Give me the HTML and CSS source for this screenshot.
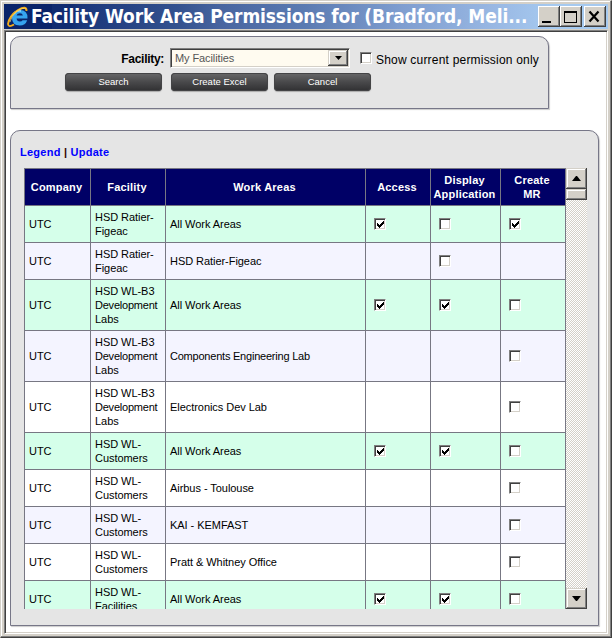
FILE: index.html
```
<!DOCTYPE html>
<html lang="en">
<head>
<meta charset="utf-8">
<title>Facility Work Area Permissions</title>
<link rel="stylesheet" href="styles.css">
</head>
<body>
<div class="window">
  <header class="titlebar">
    <svg class="logo" width="24" height="24" viewBox="0 0 24 24">
      <path d="M21.500 13.500H10.600q.3 3 3.300 3 2 0 2.700-1.200h4.600q-1.700 5.200-7.500 5.200Q6 20.500 6 12.800t7.700-7.800Q22 5 21.500 13.500zM10.600 10.500h6.300Q16.500 8.300 13.800 8.300q-2.700 0-3.200 2.200z" fill="#36a4f0" fill-rule="evenodd"/>
      <path d="M8 9q2-4 7-3" fill="none" stroke="#9edcff" stroke-width="1.500"/>
      <path d="M20.500 6Q21 0 12 5 3 11 2 19q.5 4 6 .5" fill="none" stroke="#f3ad1e" stroke-width="1.900"/>
      <path d="M20 4Q17 2 11 6 5 11 4 17" fill="none" stroke="#ffe06a" stroke-width=".7"/>
    </svg>
    <h1 class="title">Facility Work Area Permissions for (Bradford, Meli...</h1>
    <div class="controls">
      <button class="control" aria-label="Minimize"><svg width="22" height="21"><path d="M4 15h9v2H4z"/></svg></button>
      <button class="control" aria-label="Maximize"><svg width="22" height="21"><path fill-rule="evenodd" d="M4 5h13v12H4zM5 7v9h11V7z"/></svg></button>
      <button class="control close" aria-label="Close"><svg width="22" height="21"><path d="M5.500 5.500l9 10M14.500 5.500l-9 10" fill="none" stroke="#000" stroke-width="2.200"/></svg></button>
    </div>
  </header>
  <main class="content">
    <section class="panel search">
      <div class="search-row">
        <label class="facility-label">Facility:</label>
        <div class="select"><span>My Facilities</span><i class="drop"><svg width="7" height="4"><path d="M0 0h7L3.500 4z"/></svg></i></div>
        <span class="check"></span>
        <span class="current">Show current permission only</span>
      </div>
      <div class="buttons"><button>Search</button><button>Create Excel</button><button>Cancel</button></div>
    </section>
    <section class="panel results">
      <nav class="links"><a>Legend</a> | <a>Update</a></nav>
      <div class="viewport">
        <table>
          <colgroup><col class="c1"><col class="c2"><col class="c3"><col class="c4"><col class="c5"><col class="c6"></colgroup>
          <thead><tr><th>Company</th><th>Facility</th><th>Work Areas</th><th>Access</th><th>Display Application</th><th>Create<br>MR</th></tr></thead>
          <tbody>
            <tr class="all"><td>UTC</td><td>HSD Ratier-<br>Figeac</td><td>All Work Areas</td><td><span class="check on"></span></td><td><span class="check"></span></td><td><span class="check on"></span></td></tr>
            <tr class="alt"><td>UTC</td><td>HSD Ratier-<br>Figeac</td><td>HSD Ratier-Figeac</td><td></td><td><span class="check"></span></td><td></td></tr>
            <tr class="all tall"><td>UTC</td><td>HSD WL-B3<br><span class="tight">Development</span><br>Labs</td><td>All Work Areas</td><td><span class="check on"></span></td><td><span class="check on"></span></td><td><span class="check"></span></td></tr>
            <tr class="alt tall"><td>UTC</td><td>HSD WL-B3<br><span class="tight">Development</span><br>Labs</td><td><span class="tight">Components Engineering Lab</span></td><td></td><td></td><td><span class="check"></span></td></tr>
            <tr class="tall"><td>UTC</td><td>HSD WL-B3<br><span class="tight">Development</span><br>Labs</td><td>Electronics Dev Lab</td><td></td><td></td><td><span class="check"></span></td></tr>
            <tr class="all"><td>UTC</td><td>HSD WL-<br>Customers</td><td>All Work Areas</td><td><span class="check on"></span></td><td><span class="check on"></span></td><td><span class="check"></span></td></tr>
            <tr><td>UTC</td><td>HSD WL-<br>Customers</td><td>Airbus - Toulouse</td><td></td><td></td><td><span class="check"></span></td></tr>
            <tr class="alt"><td>UTC</td><td>HSD WL-<br>Customers</td><td>KAI - KEMFAST</td><td></td><td></td><td><span class="check"></span></td></tr>
            <tr><td>UTC</td><td>HSD WL-<br>Customers</td><td>Pratt &amp; Whitney Office</td><td></td><td></td><td><span class="check"></span></td></tr>
            <tr class="all"><td>UTC</td><td>HSD WL-<br>Facilities</td><td>All Work Areas</td><td><span class="check on"></span></td><td><span class="check on"></span></td><td><span class="check"></span></td></tr>
          </tbody>
        </table>
        <div class="scrollbar">
          <i class="arrow"><svg width="9" height="5"><path d="M4 0h1l4 5H0z"/></svg></i>
          <i class="thumb"></i>
          <i class="arrow down"><svg width="9" height="5"><path d="M0 0h9L5 5H4z"/></svg></i>
        </div>
      </div>
    </section>
  </main>
</div>
</body>
</html>
```
FILE: styles.css
```
* { box-sizing: border-box; }
body { margin: 0; font-family: "Liberation Sans", Arial, sans-serif; font-size: 11px; color: #000; }
.window {
  width: 612px; height: 638px; padding: 3px; overflow: hidden;
  display: flex; flex-direction: column; background: #d4d0c8;
  border: 1px solid; border-color: #d4d0c8 #404040 #404040 #d4d0c8;
  box-shadow: inset -1px -1px #808080, inset 1px 1px #fff;
}
.titlebar {
  height: 25px; margin-bottom: 1px; flex: none; display: flex; align-items: center; padding: 0 2px;
  background: linear-gradient(to right, #0a246a 0 8%, #102b70 8% 11%, #1b377b 13%, #34528f 29%, #4865a0 36%, #5b7bb2 50%, #7f9ed0 66%, #9ab9e4 82%, #a6caf0 91%);
}
.logo { flex: none; }
.title {
  margin: 0 0 0 1px; width: 499px; flex: none; white-space: nowrap; color: #fff;
  font: bold 19px/25px "DejaVu Sans Condensed", "DejaVu Sans", sans-serif; font-stretch: condensed;
  letter-spacing: -.12px;
}
.controls { display: flex; margin-left: 8px; }
.control {
  width: 22px; height: 21px; padding: 0; border: 0; background: #d4d0c8; flex: none;
  box-shadow: inset -1px -1px #404040, inset 1px 1px #fff, inset -2px -2px #808080;
}
.control svg { display: block; }
.control.close { margin-left: 2px; }
.content {
  flex: 1; padding: 5px; background: #fff;
  border: 1px solid; border-color: #808080 #fff #fff #808080;
  box-shadow: inset 1px 1px #404040, inset -1px -1px #d4d0c8;
}
.panel {
  background: #e5e5e5; border: 1px solid #777788; border-radius: 10px 10px 0 0;
  box-shadow: 1px 1px 1px #ccc;
}
.search { width: 539px; height: 73px; padding-top: 11px; }
.search-row { display: flex; height: 20px; font-size: 12px; }
.facility-label { width: 159px; padding: 4px 6px 0 0; text-align: right; font-weight: bold; line-height: 14px; letter-spacing: -.3px; }
.select {
  width: 180px; height: 20px; background: #fffbf0; color: #555; display: flex; flex: none;
  border: 1px solid; border-color: #808080 #fff #fff #808080; box-shadow: inset 1px 1px #404040, inset -1px -1px #d4d0c8;
  padding: 1px; font-size: 11px; line-height: 17px;
}
.select span { flex: 1; padding-left: 3px; letter-spacing: -.1px; }
.drop, .arrow, .thumb {
  display: flex; align-items: center; justify-content: center; background: #d4d0c8;
  box-shadow: inset -1px -1px #404040, inset 1px 1px #d4d0c8, inset -2px -2px #808080, inset 2px 2px #fff;
}
.drop { width: 20px; height: 16px; }
.check {
  display: block; flex: none; width: 12px; height: 12px; background: #fff; border: 1px solid; border-color: #808080 #fff #fff #808080;
  box-shadow: inset 1px 1px #404040, inset -1px -1px #d4d0c8;
}
.check.on::before {
  content: ""; display: block; width: 10px; height: 10px; background: #000;
  clip-path: polygon(20% 40%, 30% 40%, 30% 50%, 40% 50%, 40% 60%, 50% 60%, 50% 50%, 60% 50%, 60% 40%, 70% 40%, 70% 30%, 80% 30%, 80% 20%, 90% 20%, 90% 50%, 80% 50%, 80% 60%, 70% 60%, 70% 70%, 60% 70%, 60% 80%, 50% 80%, 50% 90%, 40% 90%, 40% 80%, 30% 80%, 30% 70%, 20% 70%);
}
.search-row .check { margin: 4px 0 0 10px; }
.current { padding-top: 5px; margin-left: 4px; line-height: 14px; white-space: nowrap; letter-spacing: .2px; }
.buttons { display: flex; margin: 5px 0 0 54px; }
.buttons button {
  width: 97px; height: 18px; margin-right: 9px; padding: 0 0 1px; border: 0; border-radius: 4px; color: #fff;
  font: 9.500px/17px "Liberation Sans", Arial, sans-serif;
  background: linear-gradient(#686869, #49494b 50%, #303032); box-shadow: inset 0 0 0 1px #444446, 0 1px 1px #aaa;
}
.buttons button:nth-child(2) { margin-right: 6px; }
.results { width: 589px; height: 496px; margin-top: 21px; padding: 14px 0 0 13px; }
.links { height: 23px; margin-left: -4px; font-weight: bold; line-height: 15px; color: #300; letter-spacing: .25px; }
.links a { color: #00f; }
.viewport { display: flex; width: 563px; height: 441px; overflow: hidden; }
table { width: 542px; flex: none; align-self: flex-start; border-collapse: separate; border-spacing: 0; table-layout: fixed; border-left: 1px solid #777783; border-top: 1px solid #777783; }
.c1 { width: 66px; } .c2 { width: 75px; } .c3 { width: 200px; } .c4 { width: 65px; } .c5 { width: 70px; } .c6 { width: 65px; }
th, td { border: solid #777783; border-width: 0 1px 1px 0; padding: 0 0 0 4px; line-height: 14px; overflow: hidden; white-space: nowrap; }
th { height: 37px; padding: 0 2px 0 0; background: #000066; color: #fff; text-align: center; white-space: normal; letter-spacing: .2px; }
td { height: 37px; background: #fff; vertical-align: middle; letter-spacing: -.05px; }
td .check { margin: 0 0 0 4px; }
.tight { letter-spacing: -.22px; }
.tall td { height: 51px; }
.alt td { background: #f4f4ff; }
.all td { background: #d5ffea; }
.scrollbar { width: 21px; height: 441px; display: flex; flex-direction: column; background: repeating-conic-gradient(#d4d0c8 0 25%, #fff 0 50%) 0 0 / 2px 2px; }
.arrow { height: 21px; flex: none; }
.thumb { height: 11px; }
.down { margin-top: auto; }
```
